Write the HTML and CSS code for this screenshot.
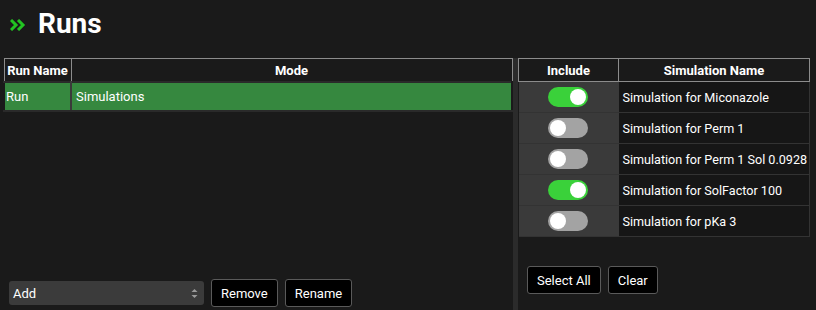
FILE: index.html
```html
<!DOCTYPE html>
<html lang="en">
<head>
    <meta charset="UTF-8">
    <title>Runs</title>
    <link rel="stylesheet" href="styles.css">
</head>
<body>

    <h1 class="title">
        <svg class="chevrons" width="16" height="12" viewBox="0 0 16 12">
            <path d="M1 1 L6 6 L1 11" fill="none" stroke="#22c422" stroke-width="3"/>
            <path d="M8 1 L13 6 L8 11" fill="none" stroke="#22c422" stroke-width="3"/>
        </svg>
        Runs
    </h1>

    <div class="main">
        <div class="panel left">
            <table class="runs">
                <tr>
                    <th class="col-name">Run Name</th>
                    <th>Mode</th>
                </tr>
                <tr class="selected">
                    <td>Run</td>
                    <td>Simulations</td>
                </tr>
            </table>

            <div class="controls">
                <div class="select">
                    <span>Add</span>
                    <svg width="7" height="11" viewBox="0 0 7 11">
                        <path d="M0.5 4 L3.5 1 L6.5 4 Z" fill="#9a9a9a"/>
                        <path d="M0.5 7 L3.5 10 L6.5 7 Z" fill="#9a9a9a"/>
                    </svg>
                </div>
                <button class="btn">Remove</button>
                <button class="btn">Rename</button>
            </div>
        </div>

        <div class="splitter"></div>

        <div class="panel right">
            <table class="sims">
                <tr>
                    <th class="col-include">Include</th>
                    <th>Simulation Name</th>
                </tr>
                <tr>
                    <td class="inc"><span class="toggle on"></span></td>
                    <td>Simulation for Miconazole</td>
                </tr>
                <tr>
                    <td class="inc"><span class="toggle"></span></td>
                    <td>Simulation for Perm 1</td>
                </tr>
                <tr>
                    <td class="inc"><span class="toggle"></span></td>
                    <td>Simulation for Perm 1 Sol 0.0928</td>
                </tr>
                <tr>
                    <td class="inc"><span class="toggle on"></span></td>
                    <td>Simulation for SolFactor 100</td>
                </tr>
                <tr>
                    <td class="inc"><span class="toggle"></span></td>
                    <td>Simulation for pKa 3</td>
                </tr>
            </table>

            <div class="controls sim-controls">
                <button class="btn">Select All</button>
                <button class="btn">Clear</button>
            </div>
        </div>
    </div>

</body>
</html>
```

FILE: styles.css
```css
body {
    margin: 0;
    background-color: #1a1a1a;
    color: #ffffff;
    font-family: Roboto, "Liberation Sans", Arial, sans-serif;
    font-size: 13px;
    height: 310px;
    overflow: hidden;
}
.title {
    display: flex;
    align-items: center;
    gap: 12px;
    margin: 0;
    padding: 5px 0 0 10px;
    height: 37px;
    font-size: 28px;
    font-weight: 700;
    color: #ffffff;
}
.chevrons {
    margin-top: 2px;
}
.main {
    display: flex;
    margin-top: 16px;
    height: 252px;
}
.panel {
    display: flex;
    flex-direction: column;
}
.left {
    width: 510px;
    padding-left: 3px;
}
.splitter {
    width: 5px;
    background: #2b2b2b;
}
.right {
    width: 292px;
}
table {
    border-collapse: collapse;
    width: 100%;
}
th {
    height: 22px;
    padding: 0;
    border: 1px solid #8c8c8c;
    font-weight: 700;
    text-align: center;
    white-space: nowrap;
}
.runs .col-name {
    width: 66px;
}
.runs td {
    height: 27px;
    padding: 0 4px;
    background: #36883f;
    border: 2px solid #2a2a2a;
    border-left-color: #1a1a1a;
    border-right-color: #3a3a3a;
}
.runs td:first-child {
    padding-left: 1px;
}
.runs td:last-child {
    border-right-color: #1a1a1a;
}
.sims {
    table-layout: fixed;
}
.sims .col-include {
    width: 99px;
}
.sims td {
    height: 30px;
    padding: 0 2px 0 4px;
    background: #161616;
    border-bottom: 1px solid #333333;
    border-right: 1px solid #333333;
    font-size: 12.6px;
    white-space: nowrap;
    overflow: hidden;
}
.sims td.inc {
    padding: 0 1px 0 0;
    background: #3a3a3a;
    text-align: center;
    border-right: none;
}
.toggle {
    display: inline-block;
    position: relative;
    width: 40px;
    height: 20px;
    border-radius: 10px;
    background: #a3a3a3;
    vertical-align: middle;
}
.toggle::after {
    content: "";
    position: absolute;
    top: 2px;
    left: 2px;
    width: 16px;
    height: 16px;
    border-radius: 50%;
    background: #ffffff;
}
.toggle.on {
    background: #3ad13a;
}
.toggle.on::after {
    left: 22px;
}
.controls {
    display: flex;
    align-items: center;
    gap: 7px;
    margin-top: auto;
    margin-bottom: 3px;
    padding-left: 6px;
}
.sim-controls {
    margin-top: 29px;
    padding-left: 9px;
}
.select {
    display: flex;
    align-items: center;
    justify-content: space-between;
    width: 195px;
    height: 24px;
    padding: 0 6px 0 4px;
    box-sizing: border-box;
    background: #3b3b3b;
    border-radius: 3px;
}
.btn {
    height: 28px;
    padding: 0 9px;
    background: #000000;
    color: #ffffff;
    border: 1px solid #5a5a5a;
    border-radius: 3px;
    font-family: inherit;
    font-size: 13px;
}
```
